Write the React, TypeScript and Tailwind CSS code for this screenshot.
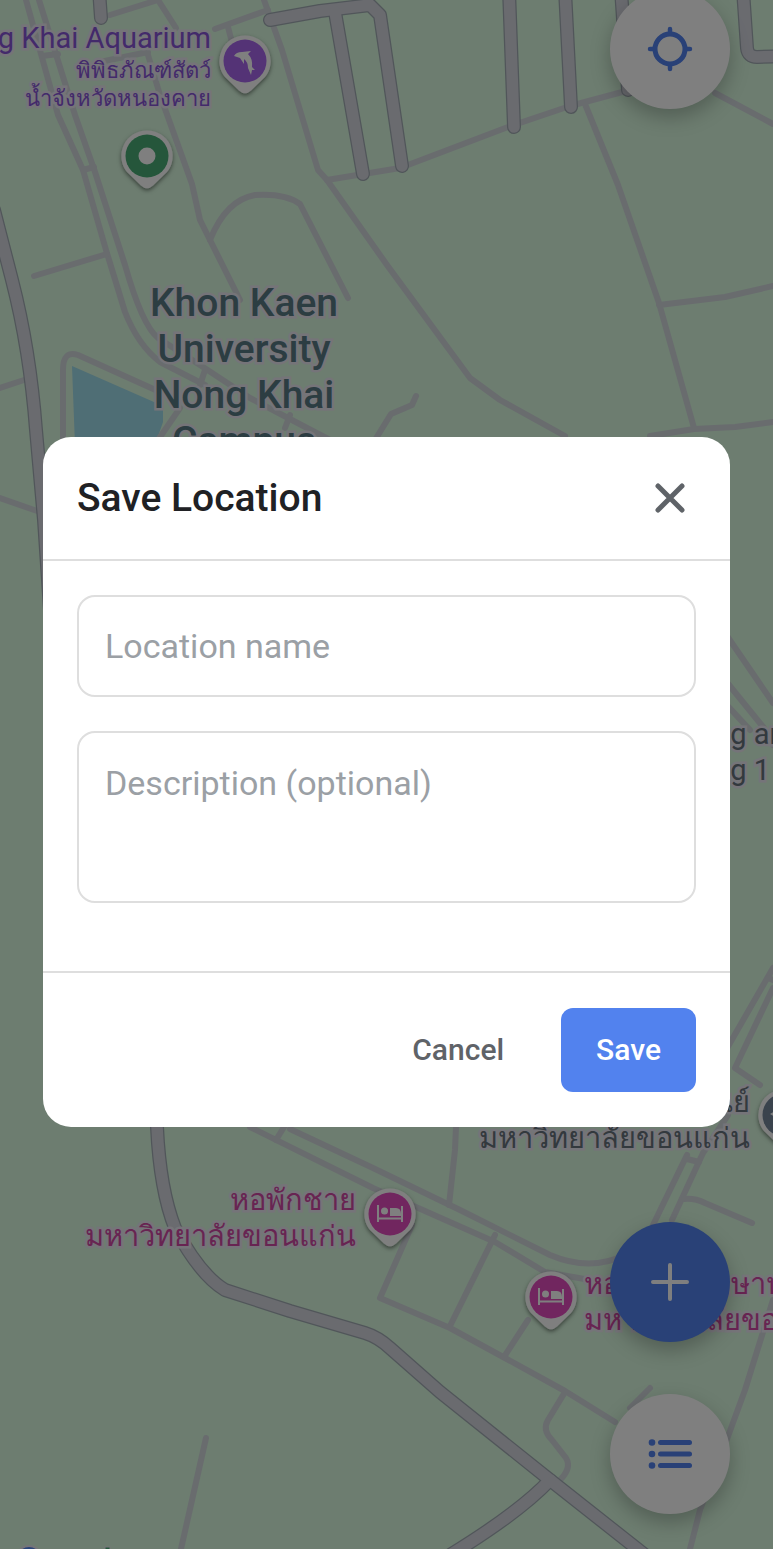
import { useState } from "react";

type Tone = "purple" | "green" | "pink" | "slate";

const minorRoads = [
  "M26 0 L58 115 L83 170 L106 250 L125 312 Q138 345 160 362 L205 385",
  "M39 0 L75 115 L95 172 L125 265 Q142 325 158 338 L200 365 L250 398 L330 440",
  "M42 56 L58 54",
  "M83 170 L94 167",
  "M34 276 L107 254",
  "M110 15 L158 0 L176 28",
  "M148 55 L160 95 L192 184 L200 220 L210 240 L240 300",
  "M100 62 L148 52",
  "M268 10 L215 29",
  "M228 27 L234 50",
  "M264 0 L282 50 L318 170 L327 180 L387 265 L470 378 L500 400 L565 436",
  "M327 180 L400 168 L508 127 L570 106 L626 91",
  "M715 93 L773 124",
  "M585 104 L618 185 L659 303 L694 428",
  "M659 305 L725 297 L773 286",
  "M650 436 L694 429 L735 427 L773 422",
  "M210 240 Q226 200 255 195 Q285 193 300 204 L348 298",
  "M63 440 L63 370 Q63 350 78 355 L160 392",
  "M0 388 L24 380",
  "M0 498 L40 512",
  "M158 440 L180 408 M205 370 L200 385 M290 415 L285 428",
  "M375 440 L391 414 L412 405 L416 396",
  "M725 633 L773 703",
  "M725 680 L764 728 L773 745",
  "M725 703 L750 730",
  "M773 968 L726 1050",
  "M773 988 L735 1068 L760 1085",
  "M768 978 L778 982",
  "M250 1127 L373 1188 L495 1242 L545 1272 L590 1280",
  "M290 1129 L373 1168 L460 1210 L550 1255 Q590 1272 625 1255",
  "M276 1140 L284 1127",
  "M456 1127 L455 1150 L449 1205",
  "M495 1235 L450 1326",
  "M412 1225 L380 1298 L450 1328 L505 1358 L565 1391 L615 1422",
  "M528 1320 L504 1357",
  "M565 1392 L548 1420 Q542 1430 552 1440 L566 1458 Q572 1468 560 1480",
  "M687 1155 L653 1225",
  "M728 1115 L703 1153 L672 1220",
  "M687 1159 L699 1162",
  "M684 1199 Q695 1198 705 1203 L752 1223",
  "M650 1388 L630 1408",
  "M773 1300 L745 1390 L723 1450 L700 1510 L690 1549",
  "M206 1438 L181 1549",
];

const mainRoads = [
  "M99 -10 L101 18",
  "M270 20 L320 11 L370 5 L380 15 L402 166",
  "M335 12 L363 174",
  "M509 -10 L514 127",
  "M565 -10 L571 107",
  "M621 -10 L628 90",
  "M743 -10 L747 48 Q748 57 757 57 L790 56",
  "M-6 210 L12 280 Q30 350 36 430 L44 520 L60 760 L150 1000 L157 1127 Q160 1190 175 1228 Q200 1275 225 1290 L290 1311 L365 1333 Q378 1337 390 1348 L440 1392 L545 1476 L645 1555",
  "M550 1480 Q520 1512 450 1555",
];

function Roads() {
  return (
    <g fill="none" strokeLinecap="round" strokeLinejoin="round">
      {minorRoads.map((d) => (
        <path key={d} d={d} stroke="#d2d8dd" strokeWidth="6" />
      ))}
      {mainRoads.map((d) => (
        <path key={d} d={d} stroke="#a2acb4" strokeWidth="14" />
      ))}
      {mainRoads.map((d) => (
        <path key={d} d={d} stroke="#d4d6df" strokeWidth="11.5" />
      ))}
    </g>
  );
}

const pinFill: Record<Tone, string> = {
  purple: "#a866ec",
  green: "#4aac76",
  pink: "#e34cbf",
  slate: "#74869b",
};

function Pin({ x, y, tone }: { x: number; y: number; tone: Tone }) {
  return (
    <g transform={`translate(${x} ${y})`}>
      <path
        d="M0 -25.500 A25.500 25.500 0 0 1 20 16 L6 29.500 Q0 35 -6 29.500 L-20 16 A25.500 25.500 0 0 1 0 -25.500 Z"
        fill="#ffffff"
        filter="url(#pinShadow)"
      />
      <circle r="21.5" fill={pinFill[tone]} />
      {tone === "green" && <circle r="8.5" fill="#ffffff" />}
      {tone === "purple" && (
        <path
          d="M-11 -5 Q-9 -9 -3 -9 L6 -10 L3 -7 Q8 -2 7 6 L10 9 L7 9 L6 14 L3 7 Q3 1 -1 -2 L-1 3 L-5 -3 L-8 -4 Z"
          fill="#ffffff"
        />
      )}
      {tone === "pink" && (
        <g fill="#ffffff">
          <path d="M-13 -9 h2 v12.500 h22 v-11.500 h2 v16 h-2 v-2.500 h-22 v2.500 h-2 Z" />
          <circle cx="-5.500" cy="-3" r="3.500" />
          <path d="M0 -6 H6 Q11 -6 11 0 V2 H0 Z" />
        </g>
      )}
      {tone === "slate" && (
        <path d="M-14 -1 L0 -9 L14 -1 L0 7 Z M-8 5 L0 9 L8 5 V9 L0 13 L-8 9 Z" fill="#ffffff" />
      )}
    </g>
  );
}

const label =
  "absolute whitespace-nowrap [paint-order:stroke_fill] [-webkit-text-stroke:5px_#ebe9f2]";

function MapCanvas() {
  return (
    <div className="absolute inset-0 overflow-hidden bg-[#dafae0]">
      <svg
        className="absolute top-0 left-0"
        width="773"
        height="1549"
        viewBox="0 0 773 1549"
        overflow="visible"
        aria-hidden="true"
      >
        <defs>
          <filter id="pinShadow" x="-30%" y="-30%" width="160%" height="160%">
            <feDropShadow dx="0" dy="2" stdDeviation="2" floodColor="#000" floodOpacity="0.5" />
          </filter>
        </defs>
        <path d="M72 366 L163 406 L163 422 L155 445 L75 445 Z" fill="#9edcea" />
        <Roads />
        <circle cx="29" cy="1559" r="13" fill="#4f86f0" stroke="#ebe9f2" strokeWidth="2" />
        <rect x="105" y="1547" width="5" height="20" fill="#4aac76" stroke="#ebe9f2" strokeWidth="1" />
      </svg>

      <p className={`${label} top-[22px] right-[calc(100%-211px)] text-right text-[29px] leading-8 text-[#8754d6]`}>
        Nong Khai Aquarium
      </p>
      <p className={`${label} top-[57px] right-[calc(100%-211px)] text-right text-[22px] leading-7 text-[#8754d6]`}>
        พิพิธภัณฑ์สัตว์
        <br />
        น้ำจังหวัดหนองคาย
      </p>
      <p className={`${label} top-[280px] left-[244px] -translate-x-1/2 text-center text-[39px] leading-[46px] font-medium text-[#587a84]`}>
        Khon Kaen
        <br />
        University
        <br />
        Nong Khai
        <br />
        Campus
      </p>
      <p className={`${label} top-[716px] left-[677px] text-[29px] leading-9 text-[#67727c]`}>
        Nong and
        <br />
        Nong 1
      </p>
      <p className={`${label} top-[1084px] right-[calc(100%-750px)] text-right text-[29px] leading-9 text-[#67727c]`}>
        ศูนย์
        <br />
        มหาวิทยาลัยขอนแก่น
      </p>
      <p className={`${label} top-[1182px] right-[calc(100%-356px)] text-right text-[29px] leading-9 text-[#d048a4]`}>
        หอพักชาย
        <br />
        มหาวิทยาลัยขอนแก่น
      </p>
      <p className={`${label} top-[1266px] left-[584px] text-[29px] leading-9 text-[#d048a4]`}>
        หอพักนักศึกษาหญิง
        <br />
        มหาวิทยาลัยขอนแก่น
      </p>

      <svg
        className="absolute top-0 left-0"
        width="773"
        height="1549"
        viewBox="0 0 773 1549"
        overflow="visible"
        aria-hidden="true"
      >
        <Pin x={245} y={61} tone="purple" />
        <Pin x={147} y={156} tone="green" />
        <Pin x={390} y={1214} tone="pink" />
        <Pin x={551} y={1297} tone="pink" />
        <Pin x={784} y={1115} tone="slate" />
      </svg>
    </div>
  );
}

const fab = "flex size-[120px] items-center justify-center rounded-full shadow-[0_8px_20px_rgba(0,0,0,0.25)]";

function MapControls() {
  return (
    <>
      <button type="button" aria-label="My location" className={`${fab} absolute -top-[11px] right-[43px] bg-white`}>
        <svg width="46" height="46" viewBox="0 0 46 46" fill="none" stroke="#5282ee" strokeLinecap="round" aria-hidden="true">
          <circle cx="23" cy="23" r="15" strokeWidth="5" />
          <path d="M23 3V7M23 39V43M3 23H7M39 23H43" strokeWidth="4.500" />
        </svg>
      </button>
      <div className="absolute right-[43px] bottom-[35px] flex flex-col gap-[52px]">
        <button type="button" aria-label="Add location" className={`${fab} bg-[#5282ee]`}>
          <svg width="40" height="40" viewBox="0 0 40 40" stroke="#fff" strokeWidth="4" strokeLinecap="round" aria-hidden="true">
            <path d="M20 3V37M3 20H37" />
          </svg>
        </button>
        <button type="button" aria-label="Saved locations" className={`${fab} bg-white`}>
          <svg width="44" height="32" viewBox="0 0 44 32" fill="#5282ee" aria-hidden="true">
            <circle cx="4" cy="4.500" r="3.300" />
            <circle cx="4" cy="16" r="3.300" />
            <circle cx="4" cy="27.500" r="3.300" />
            <rect x="10" y="2" width="34" height="5" rx="2.500" />
            <rect x="10" y="13.500" width="34" height="5" rx="2.500" />
            <rect x="10" y="25" width="34" height="5" rx="2.500" />
          </svg>
        </button>
      </div>
    </>
  );
}

const field =
  "block w-full rounded-[18px] border-2 border-[#dedede] bg-white px-[26px] text-[34px] leading-10 text-[#202124] outline-none placeholder:text-[#9ba0a5]";

function SaveLocationDialog() {
  const [name, setName] = useState("");
  const [description, setDescription] = useState("");

  return (
    <form
      role="dialog"
      aria-modal="true"
      aria-labelledby="dialog-title"
      onSubmit={(event) => event.preventDefault()}
      className="w-full rounded-[28px] bg-white"
    >
      <header className="flex items-center justify-between border-b-2 border-[#dedede] px-[34px] py-[35px]">
        <h2 id="dialog-title" className="text-[39px] leading-[52px] font-medium text-[#202124]">
          Save Location
        </h2>
        <button type="button" aria-label="Close" className="flex size-[52px] items-center justify-center">
          <svg width="30" height="30" viewBox="0 0 30 30" stroke="#5f6368" strokeWidth="5" strokeLinecap="round" aria-hidden="true">
            <path d="M3 3L27 27M27 3L3 27" />
          </svg>
        </button>
      </header>
      <div className="flex flex-col gap-[34px] px-[34px] pt-[34px] pb-[68px]">
        <input
          type="text"
          aria-label="Location name"
          placeholder="Location name"
          value={name}
          onChange={(event) => setName(event.target.value)}
          className={`${field} h-[102px]`}
        />
        <textarea
          aria-label="Description (optional)"
          placeholder="Description (optional)"
          value={description}
          onChange={(event) => setDescription(event.target.value)}
          className={`${field} h-[172px] resize-none py-[30px]`}
        />
      </div>
      <footer className="flex justify-end gap-[22px] border-t-2 border-[#dedede] px-[34px] py-[35px] text-[30px] leading-9 font-medium">
        <button type="button" className="rounded-xl px-[35px] py-6 text-[#5f6368]">
          Cancel
        </button>
        <button type="submit" className="rounded-xl bg-[#5282ee] px-[35px] py-6 text-white">
          Save
        </button>
      </footer>
    </form>
  );
}

export default function App() {
  return (
    <main className="relative min-h-screen overflow-hidden font-[Roboto,'Noto_Sans',sans-serif]">
      <MapCanvas />
      <MapControls />
      <div className="relative flex min-h-screen items-center justify-center bg-black/50 px-[43px] pt-[14px]">
        <SaveLocationDialog />
      </div>
    </main>
  );
}
